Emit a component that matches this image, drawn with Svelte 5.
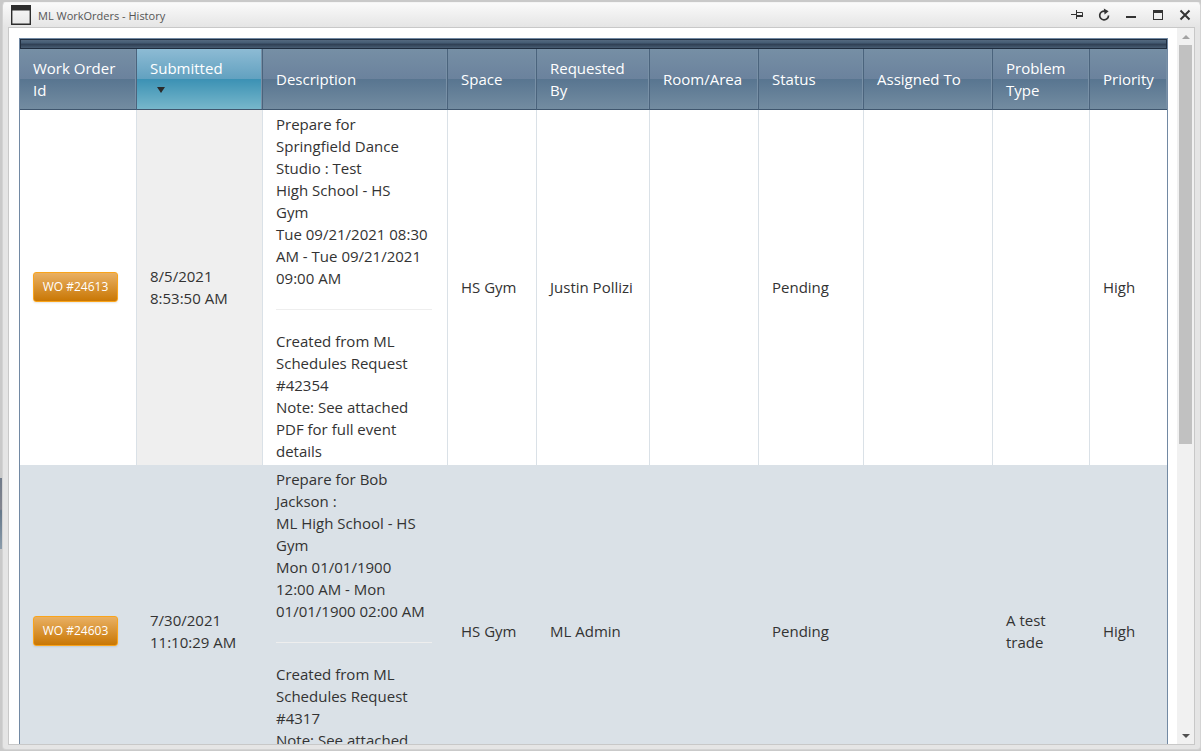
<script>
  const columns = [
    { label: ['Work Order', 'Id'], width: 116 },
    { label: ['Submitted'], width: 126, sorted: true },
    { label: ['Description'], width: 185 },
    { label: ['Space'], width: 89 },
    { label: ['Requested', 'By'], width: 113 },
    { label: ['Room/Area'], width: 109 },
    { label: ['Status'], width: 105 },
    { label: ['Assigned To'], width: 129 },
    { label: ['Problem', 'Type'], width: 97 },
    { label: ['Priority'], width: 78 }
  ];

  const orders = [
    {
      id: 'WO #24613',
      submitted: ['8/5/2021', '8:53:50 AM'],
      event: ['Prepare for', 'Springfield Dance', 'Studio : Test', 'High School - HS', 'Gym', 'Tue 09/21/2021 08:30', 'AM - Tue 09/21/2021', '09:00 AM'],
      note: ['Created from ML', 'Schedules Request', '#42354', 'Note: See attached', 'PDF for full event', 'details'],
      rest: [['HS Gym'], ['Justin Pollizi'], [], ['Pending'], [], [], ['High']]
    },
    {
      id: 'WO #24603',
      submitted: ['7/30/2021', '11:10:29 AM'],
      event: ['Prepare for Bob', 'Jackson :', 'ML High School - HS', 'Gym', 'Mon 01/01/1900', '12:00 AM - Mon', '01/01/1900 02:00 AM'],
      note: ['Created from ML', 'Schedules Request', '#4317', 'Note: See attached', 'PDF for full event', 'details'],
      rest: [['HS Gym'], ['ML Admin'], [], ['Pending'], [], ['A test', 'trade'], ['High']]
    }
  ];
</script>

{#snippet lines(parts)}
  {#each parts as part, i}{#if i > 0}<br />{/if}{part}{/each}
{/snippet}

<div class="backdrop">
  <section class="window" aria-label="ML WorkOrders - History">
    <header class="titlebar">
      <svg class="app-icon" width="20" height="20" viewBox="0 0 20 20" aria-hidden="true">
        <path d="M0 0H20V20H0Z M1.4 5.5V18.6H18.6V5.5Z" fill="#2d2d2d" fill-rule="evenodd" />
      </svg>
      <h1>ML WorkOrders - History</h1>
      <div class="commands">
        <button type="button" aria-label="Pin">
          <svg width="14" height="14" viewBox="0 0 14 14"><path d="M1 6.5H6 M6.5 2V11 M6.5 4.5H12.5V8.5H6.5" fill="none" stroke="#333" /><path d="M7 7H13V9H7Z" fill="#333" /></svg>
        </button>
        <button type="button" aria-label="Reload">
          <svg width="14" height="14" viewBox="0 0 14 14"><path d="M8 3.2A4.4 4.4 0 1 0 11.5 7.5" fill="none" stroke="#333" stroke-width="1.7" /><path d="M6.8 0.6L11.6 3.2L7.6 6.6Z" fill="#333" /></svg>
        </button>
        <button type="button" aria-label="Minimize">
          <svg width="14" height="14" viewBox="0 0 14 14"><path d="M2 8H12V10H2Z" fill="#333" /></svg>
        </button>
        <button type="button" aria-label="Maximize">
          <svg width="14" height="14" viewBox="0 0 14 14"><path d="M2 2H12V12H2Z M3 5V11H11V5Z" fill="#333" fill-rule="evenodd" /></svg>
        </button>
        <button type="button" aria-label="Close">
          <svg width="14" height="14" viewBox="0 0 14 14"><path d="M2.5 2.5L11.5 11.5M11.5 2.5L2.5 11.5" fill="none" stroke="#333" stroke-width="2" /></svg>
        </button>
      </div>
    </header>

    <div class="content">
      <main>
        <div class="grid">
          <div class="command-strip"></div>
          <table>
            <colgroup>
              {#each columns as column}<col style="width: {column.width}px" />{/each}
            </colgroup>
            <thead>
              <tr>
                {#each columns as column}
                  <th scope="col" class:sorted={column.sorted} aria-sort={column.sorted ? 'descending' : undefined}>
                    {@render lines(column.label)}
                    {#if column.sorted}
                      <span class="arrow"><svg width="8" height="6" viewBox="0 0 8 6" aria-hidden="true"><path d="M0 0H8L4 6Z" fill="#2b2b2b" /></svg></span>
                    {/if}
                  </th>
                {/each}
              </tr>
            </thead>
            <tbody>
              {#each orders as order}
                <tr>
                  <td><button type="button" class="order">{order.id}</button></td>
                  <td class="sorted">{@render lines(order.submitted)}</td>
                  <td class="description">
                    {@render lines(order.event)}
                    <hr />
                    {@render lines(order.note)}
                  </td>
                  {#each order.rest as value}<td>{@render lines(value)}</td>{/each}
                </tr>
              {/each}
            </tbody>
          </table>
        </div>
      </main>
      <div class="scrollbar" aria-hidden="true">
        <span class="step"><svg width="8" height="4" viewBox="0 0 8 4"><path d="M0 4L4 0L8 4Z" fill="#a3a3a3" /></svg></span>
        <span class="track"><span class="thumb"></span></span>
        <span class="step"><svg width="8" height="4" viewBox="0 0 8 4"><path d="M0 0H8L4 4Z" fill="#505050" /></svg></span>
      </div>
    </div>
  </section>
</div>

<style>
  :global(body) {
    margin: 0;
    overflow: hidden;
  }

  .backdrop {
    box-sizing: border-box;
    height: 100vh;
    padding: 2px 0 1px 2px;
    background:
      linear-gradient(#6f7a89, #85868f 44%, #65788a 46%, #8b9cab) 0 478px / 2px 71px no-repeat,
      #c9c9c9;
    font-family: 'Segoe UI', 'Open Sans', sans-serif;
  }

  .window {
    box-sizing: border-box;
    display: flex;
    flex-direction: column;
    height: 100%;
    padding: 0 5px 4px;
    border: 1px solid #d3d3d3;
    border-top-color: #f4f4f4;
    border-radius: 4px;
    background: linear-gradient(#fafafa, #e5e5e5 24px);
  }

  .titlebar {
    display: flex;
    align-items: center;
    height: 24px;
    padding: 0 3px;
  }

  .app-icon {
    flex: none;
  }

  h1 {
    flex: 1;
    margin: 0 0 0 7px;
    font-size: 11px;
    font-weight: 400;
    color: #555;
  }

  .commands {
    display: flex;
    gap: 13px;
  }

  .commands button {
    display: flex;
    padding: 0;
    border: 0;
    background: none;
  }

  .content {
    flex: 1;
    display: flex;
    min-height: 0;
    border: 1px solid #c8c8c8;
    background: #fff;
  }

  main {
    flex: 1;
    min-width: 0;
    padding: 10px 9px 0 10px;
    overflow: hidden;
  }

  .grid {
    border: 1px solid #7289a3;
    color: #333;
    font-size: 15px;
    line-height: 22px;
  }

  .command-strip {
    height: 8px;
    border: 1px solid #1f2d3f;
    background: linear-gradient(#54697f, #435a72 40%, #2d3d51 50%, #475c72);
  }

  table {
    width: 100%;
    table-layout: fixed;
    border-collapse: separate;
    border-spacing: 0;
  }

  th,
  td {
    padding: 3px 13px;
    border-left: 1px solid #dae1e7;
    text-align: left;
    vertical-align: middle;
    white-space: nowrap;
  }

  td {
    padding: 2px 13px 4px;
  }

  td.description {
    padding: 3px 15px 3px 13px;
  }

  th {
    height: 54px;
    border-left-color: #4b647d;
    border-bottom: 1px solid #3f566e;
    background: linear-gradient(#768fa5, #6b829d 50%, #587590 50%, #738ca1);
    box-shadow: inset -1px 0 #7890a6;
    color: #fff;
    font-weight: 400;
  }

  th.sorted {
    background: linear-gradient(#8dbbd4, #62a1c0 50%, #3b91b4 50%, #77b7cb);
  }

  th:first-child,
  td:first-child {
    border-left: 0;
  }

  .arrow {
    display: flex;
    align-items: center;
    height: 22px;
    padding-left: 7px;
  }

  tbody tr:nth-child(odd) td.sorted {
    background: #efefef;
  }

  tbody tr:nth-child(even) td {
    border-color: #dae1e7;
    background: #dae1e7;
  }

  hr {
    height: 1px;
    margin: 20px 0;
    border: 0;
    background: #eee;
  }

  .order {
    display: block;
    width: 85px;
    height: 30px;
    padding: 0;
    border: 1px solid #faa41a;
    border-radius: 3px;
    background: linear-gradient(#e9b063, #c97704);
    box-shadow: 0 1px 2px rgba(0, 0, 0, 0.1);
    color: #fff;
    font-family: inherit;
    font-size: 12px;
  }

  .scrollbar {
    display: flex;
    flex-direction: column;
    width: 17px;
    background: #f1f1f1;
  }

  .step {
    display: flex;
    align-items: center;
    justify-content: center;
    height: 17px;
  }

  .track {
    flex: 1;
    padding: 0 2px;
  }

  .thumb {
    display: block;
    height: 58.5%;
    background: #c1c1c1;
  }
</style>
